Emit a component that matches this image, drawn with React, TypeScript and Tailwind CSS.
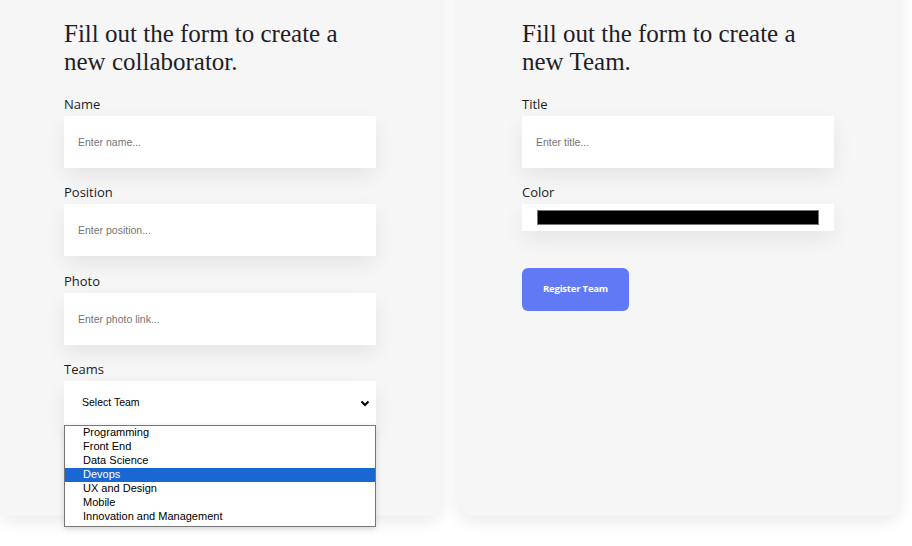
import React from "react";

const serif = { fontFamily: '"Liberation Serif", "DejaVu Serif", serif' };

function Label({ children }: { children: React.ReactNode }) {
  return (
    <label className="block h-4 mb-[4px] text-[13px] leading-4 font-medium text-[#1c1c1c] font-['Open_Sans',sans-serif]">
      {children}
    </label>
  );
}

function TextField({ label, placeholder, gap = "mb-4" }: { label: string; placeholder: string; gap?: string }) {
  return (
    <div className={gap}>
      <Label>{label}</Label>
      <input
        type="text"
        placeholder={placeholder}
        className="w-[312px] h-[52px] bg-white px-[14px] text-[10.5px] text-[#333] font-['Liberation_Sans',Arial,sans-serif] placeholder:text-[#757575] outline-none shadow-[0_8px_22px_rgba(0,0,0,0.07)]"
      />
    </div>
  );
}

const teams = [
  "Programming",
  "Front End",
  "Data Science",
  "Devops",
  "UX and Design",
  "Mobile",
  "Innovation and Management",
];

function TeamSelect() {
  return (
    <div className="relative">
      <Label>Teams</Label>
      <div className="w-[312px] h-[44px] bg-white flex items-center justify-between pl-[18px] pr-[5px] text-[10.5px] text-black font-['Liberation_Sans',Arial,sans-serif] shadow-[0_8px_22px_rgba(0,0,0,0.07)]">
        <span>Select Team</span>
        <svg width="10" height="7" viewBox="0 0 10 7" className="mr-[1px]">
          <path d="M1.5 1.5 L5 5 L8.5 1.5" fill="none" stroke="#000" strokeWidth="2" />
        </svg>
      </div>
      {/* open dropdown list */}
      <ul className="absolute left-0 top-[64px] w-[312px] bg-white border border-[#767676] pb-[2px] font-['Liberation_Sans',Arial,sans-serif] text-[11px] leading-[12px] text-black shadow-[0_2px_6px_rgba(0,0,0,0.15)] z-10">
        {teams.map((t) => (
          <li
            key={t}
            className={`h-[14px] pl-[18px] ${t === "Devops" ? "bg-[#1967d2] text-white" : ""}`}
          >
            {t}
          </li>
        ))}
      </ul>
    </div>
  );
}

export default function App() {
  return (
    <div className="min-h-[546px] bg-white overflow-hidden">
      <div className="flex gap-[15px] -ml-[2px] -mt-10">
        {/* Collaborator form */}
        <div className="w-[444px] h-[556px] shrink-0 rounded-2xl bg-[#f6f6f6] pt-[60px] pl-[66px] shadow-[0_6px_16px_rgba(0,0,0,0.08)]">
          <h2 style={serif} className="w-[312px] text-[25px] leading-[28px] text-[#1f1d2a] mb-[20px]">
            Fill out the form to create a new collaborator.
          </h2>
          <TextField label="Name" placeholder="Enter name..." />
          <TextField label="Position" placeholder="Enter position..." gap="mb-[17px]" />
          <TextField label="Photo" placeholder="Enter photo link..." />
          <TeamSelect />
        </div>

        {/* Team form */}
        <div className="w-[444px] h-[556px] shrink-0 rounded-2xl bg-[#f6f6f6] pt-[60px] pl-[65px] shadow-[0_6px_16px_rgba(0,0,0,0.08)]">
          <h2 style={serif} className="w-[312px] text-[25px] leading-[28px] text-[#1f1d2a] mb-[20px]">
            Fill out the form to create a new Team.
          </h2>
          <TextField label="Title" placeholder="Enter title..." />
          <div>
            <Label>Color</Label>
            <div className="w-[312px] h-[27px] bg-white flex items-center px-[15px] shadow-[0_8px_22px_rgba(0,0,0,0.07)]">
              <div className="w-full h-[15px] bg-black border border-[#777]" />
            </div>
          </div>
          <button
            type="button"
            className="mt-[37px] w-[107px] h-[43px] rounded-md bg-[#6279f6] text-white text-[9.5px] font-bold tracking-[-0.2px] font-['Open_Sans',sans-serif]"
          >
            Register Team
          </button>
        </div>
      </div>
    </div>
  );
}
